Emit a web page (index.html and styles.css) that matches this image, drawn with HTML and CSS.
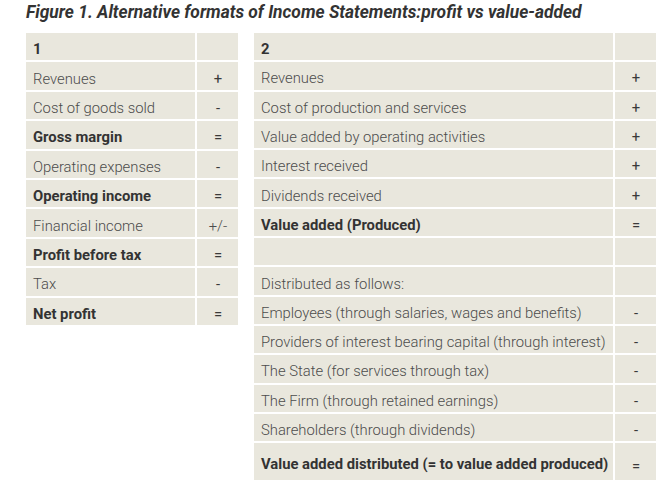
FILE: index.html
```html
<!DOCTYPE html>
<html>
<head>
<meta charset="utf-8">
<link rel="stylesheet" href="styles.css">
</head>
<body>
<div class="figure">
  <h1 class="title">Figure 1. Alternative formats of Income Statements:profit vs value-added</h1>
  <div class="tables">
    <div class="tbl tbl-1">
      <div class="cell label head">1</div><div class="cell sym"></div>
      <div class="cell label">Revenues</div><div class="cell sym">+</div>
      <div class="cell label">Cost of goods sold</div><div class="cell sym">-</div>
      <div class="cell label strong">Gross margin</div><div class="cell sym">=</div>
      <div class="cell label">Operating expenses</div><div class="cell sym">-</div>
      <div class="cell label strong">Operating income</div><div class="cell sym">=</div>
      <div class="cell label">Financial income</div><div class="cell sym light">+/-</div>
      <div class="cell label strong">Profit before tax</div><div class="cell sym">=</div>
      <div class="cell label">Tax</div><div class="cell sym">-</div>
      <div class="cell label strong">Net profit</div><div class="cell sym">=</div>
    </div>
    <div class="tbl tbl-2">
      <div class="cell label head">2</div><div class="cell sym"></div>
      <div class="cell label">Revenues</div><div class="cell sym">+</div>
      <div class="cell label">Cost of production and services</div><div class="cell sym">+</div>
      <div class="cell label">Value added by operating activities</div><div class="cell sym">+</div>
      <div class="cell label">Interest received</div><div class="cell sym">+</div>
      <div class="cell label">Dividends received</div><div class="cell sym">+</div>
      <div class="cell label strong">Value added (Produced)</div><div class="cell sym">=</div>
      <div class="cell label"></div><div class="cell sym"></div>
      <div class="cell label">Distributed as follows:</div><div class="cell sym"></div>
      <div class="cell label">Employees (through salaries, wages and benefits)</div><div class="cell sym">-</div>
      <div class="cell label">Providers of interest bearing capital (through interest)</div><div class="cell sym">-</div>
      <div class="cell label">The State (for services through tax)</div><div class="cell sym">-</div>
      <div class="cell label">The Firm (through retained earnings)</div><div class="cell sym">-</div>
      <div class="cell label">Shareholders (through dividends)</div><div class="cell sym">-</div>
      <div class="cell label strong">Value added distributed (= to value added produced)</div><div class="cell sym low">=</div>
    </div>
  </div>
</div>
</body>
</html>
```

FILE: styles.css
```css
html, body {
  margin: 0;
  padding: 0;
  background: #ffffff;
}

body {
  font-family: Roboto, "Liberation Sans", sans-serif;
}

.figure {
  padding: 2px 0 0 26px;
}

.title {
  margin: 0;
  font-size: 17.4px;
  line-height: 20px;
  font-weight: 700;
  font-style: italic;
  color: #333333;
  height: 31px;
}

.tables {
  display: flex;
  align-items: flex-start;
  gap: 16px;
}

.tbl {
  display: grid;
  column-gap: 2px;
  row-gap: 2px;
}

.tbl-1 {
  grid-template-columns: 169px 41px;
  grid-template-rows: repeat(10, 27.4px);
}

.tbl-2 {
  grid-template-columns: 359px 41px;
  grid-template-rows: repeat(14, 27.3px) 37px;
}

.cell {
  box-sizing: border-box;
  background: #e9e7dd;
  display: flex;
  align-items: center;
  padding-top: 5px;
  font-size: 14.8px;
  font-weight: 300;
  color: #4c4c4c;
  white-space: nowrap;
}

.label {
  padding-left: 7px;
}

.sym {
  justify-content: center;
  padding-left: 1px;
  font-weight: 400;
  color: #3a3a3a;
}

.sym.light {
  font-weight: 300;
  color: #4c4c4c;
}

.head,
.strong {
  font-weight: 700;
  color: #333333;
}

.low {
  padding-top: 9px;
}
```
